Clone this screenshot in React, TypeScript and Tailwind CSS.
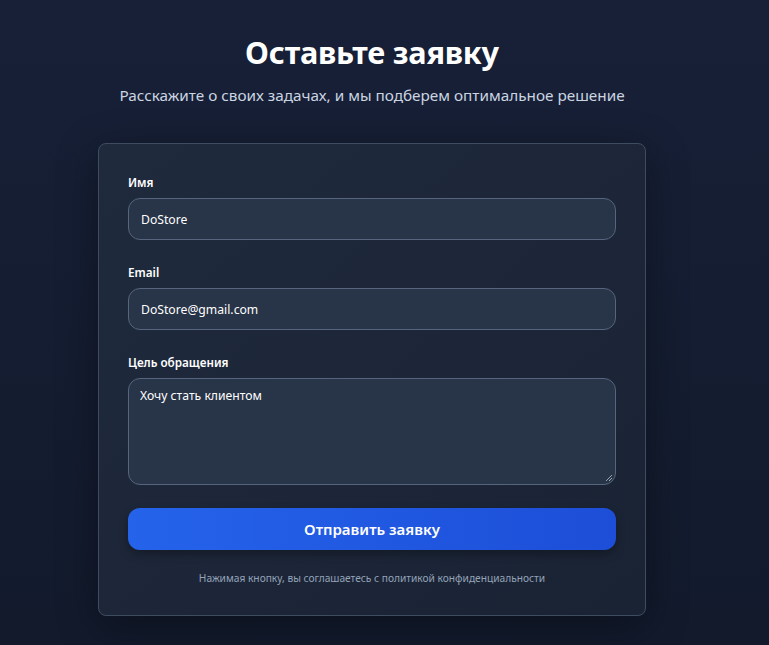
import React from "react";

export default function App() {
  return (
    <div
      className="min-h-screen w-full flex flex-col items-center pt-[34px] pr-[25px] bg-gradient-to-b from-[#172037] to-[#121a2c]"
      style={{ fontFamily: '"Noto Sans", "Open Sans", sans-serif', height: 645 }}
    >
      <h1 className="text-[30.7px] leading-9 font-bold text-white tracking-[-0.2px]">Оставьте заявку</h1>
      <p className="mt-[13px] text-[15.3px] leading-6 text-[#cbd5e1]">
        Расскажите о своих задачах, и мы подберем оптимальное решение
      </p>
      <div className="mt-[36px] w-[548px] rounded-lg border border-[#3f4b5e] bg-gradient-to-br from-[#1f2a3d] to-[#1a2334] pt-[28px] px-[29px] pb-[29px] shadow-[0_10px_40px_rgba(0,0,0,0.35)]">
        <label className="block text-[11.7px] leading-5 font-semibold text-white mb-[6px]">Имя</label>
        <div className="h-[42px] rounded-xl border border-[#56657d] bg-[#283447] flex items-center pt-[3px] px-[12px] text-[12.2px] text-white">
          DoStore
        </div>
        <label className="block mt-[22px] text-[11.7px] leading-5 font-semibold text-white mb-[6px]">Email</label>
        <div className="h-[42px] rounded-xl border border-[#56657d] bg-[#283447] flex items-center pt-[3px] px-[12px] text-[12.2px] text-white">
          DoStore@gmail.com
        </div>
        <label className="block mt-[22px] text-[11.7px] leading-5 font-semibold text-white mb-[6px]">Цель обращения</label>
        <div className="relative h-[107px] rounded-xl border border-[#56657d] bg-[#283447] px-[11px] pt-[7px] text-[12.2px] leading-5 text-white">
          Хочу стать клиентом
          <svg className="absolute right-[2px] bottom-[2px]" width="8" height="8" viewBox="0 0 8 8">
            <path d="M7 1 L1 7 M7 4 L4 7" stroke="#9aa3b0" strokeWidth="1" />
          </svg>
        </div>
        <div className="mt-[23px] h-[42px] rounded-xl bg-gradient-to-r from-[#2563eb] to-[#1d4ed8] flex items-center justify-center text-[15px] font-semibold text-white shadow-[0_4px_10px_rgba(0,0,0,0.3)]">
          Отправить заявку
        </div>
        <p className="mt-[20px] text-center text-[10.2px] leading-4 text-[#94a3b8]">
          Нажимая кнопку, вы соглашаетесь с политикой конфиденциальности
        </p>
      </div>
    </div>
  );
}
